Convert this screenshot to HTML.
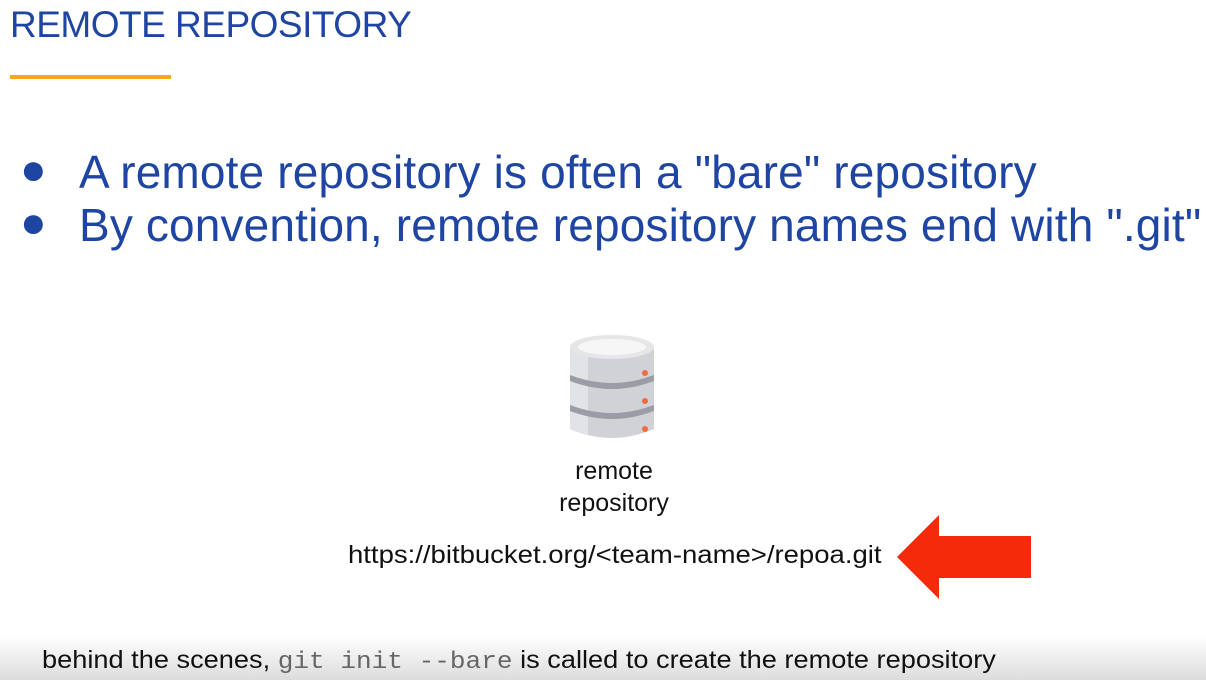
<!DOCTYPE html>
<html><head><style>
body{margin:0;width:1206px;height:680px;background:#fff;position:relative;overflow:hidden;font-family:"Liberation Sans",sans-serif;}
.t{position:absolute;white-space:nowrap;transform-origin:0 0;}
</style></head><body>
<div class="t" style="left:10px;top:4px;font-size:37px;color:#1f45a3;letter-spacing:-0.5px">REMOTE REPOSITORY</div>
<div style="position:absolute;left:10px;top:75px;width:161px;height:4px;background:#f4a81c"></div>
<div class="t" style="left:20px;top:145px;font-size:44px;color:#1f45a3">●</div>
<div class="t" style="left:79px;top:145px;font-size:46px;color:#1f45a3;letter-spacing:0.15px">A remote repository is often a "bare" repository</div>
<div class="t" style="left:20px;top:198px;font-size:44px;color:#1f45a3">●</div>
<div class="t" style="left:79px;top:198px;font-size:46px;color:#1f45a3;letter-spacing:0.15px">By convention, remote repository names end with ".git"</div>
<svg style="position:absolute;left:568px;top:333px" width="90" height="110" viewBox="0 0 90 110">
<path d="M2 14 V96 Q44 114 86 96 V14 Z" fill="#d1d2d6"/>
<path d="M2 14 V96 Q10 100 20 102 V14 Z" fill="#e2e3e6"/>
<path d="M2 42 Q44 58 86 42 V48 Q44 64 2 48 Z" fill="#9a9da5"/>
<path d="M2 72 Q44 88 86 72 V78 Q44 94 2 78 Z" fill="#9a9da5"/>
<ellipse cx="44" cy="14" rx="42" ry="12" fill="#e6e6e9"/>
<ellipse cx="44" cy="14" rx="34" ry="8" fill="#f6f6f7"/>
<circle cx="77" cy="40" r="3" fill="#f36a3b"/>
<circle cx="77" cy="68" r="3" fill="#f36a3b"/>
<circle cx="77" cy="96" r="3" fill="#f36a3b"/>
</svg>
<div class="t" style="left:514px;width:200px;text-align:center;top:455px;font-size:25px;line-height:32px;color:#111">remote<br>repository</div>
<div class="t" style="left:348px;top:541px;font-size:25px;color:#111;transform:scaleX(1.10)">https://bitbucket.org/&lt;team-name&gt;/repoa.git</div>
<svg style="position:absolute;left:895px;top:514px" width="138" height="86"><polygon points="2,43 44,1 44,22 136,22 136,64 44,64 44,85" fill="#f52a0a"/></svg>
<div style="position:absolute;left:0;top:636px;width:1206px;height:44px;background:linear-gradient(#fff,#dcdcdc)"></div>
<div class="t" style="left:42px;top:646px;font-size:25px;color:#111;transform:scaleX(1.087)">behind the scenes, <span style="font-family:'Liberation Mono',monospace;color:#666;font-size:24px">git init --bare</span> is called to create the remote repository</div>
</body></html>
